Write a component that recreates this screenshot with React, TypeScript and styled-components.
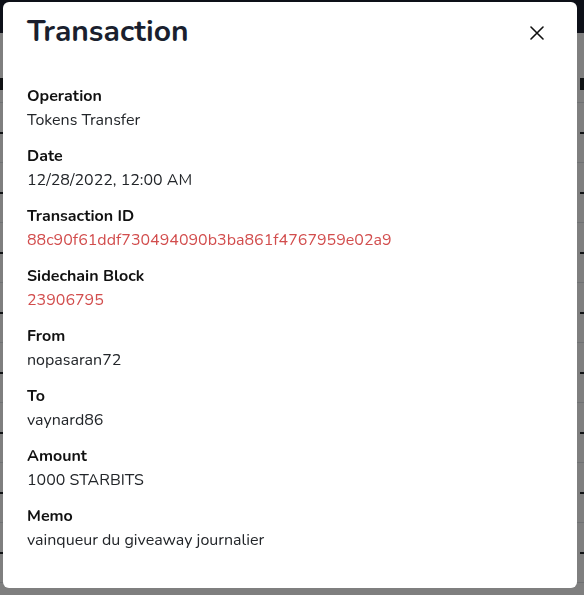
import * as React from "react";
import styled, { createGlobalStyle } from "styled-components";

const GlobalStyle = createGlobalStyle`
  html, body {
    margin: 0;
    padding: 0;
    height: 100%;
    overflow: hidden;
  }
  body {
    font-family: "Nunito", "Lato", "Noto Sans", sans-serif;
    background: #ffffff;
  }
`;

const Page = styled.div`
  height: 100vh;
  display: flex;
  flex-direction: column;
`;

const NavBar = styled.div`
  height: 33px;
  background: #1b2130;
  flex-shrink: 0;
`;

const Table = styled.div`
  display: flex;
  flex-direction: column;
`;

const TableRow = styled.div<{ $head?: boolean }>`
  display: flex;
  justify-content: space-between;
  align-items: ${(p) => (p.$head ? "flex-end" : "center")};
  height: ${(p) => (p.$head ? "70px" : "60px")};
  padding-bottom: ${(p) => (p.$head ? "12px" : "0")};
  border-bottom: 1px solid #dee2e6;
  box-sizing: border-box;
`;

// edge fragments of the table behind the overlay
const Mark = styled.div<{ $tall?: boolean }>`
  width: 8px;
  height: ${(p) => (p.$tall ? "12px" : "2px")};
  background: #212529;
  margin: 0 -4px;
`;

const Backdrop = styled.div`
  position: fixed;
  inset: 0;
  background: rgba(0, 0, 0, 0.5);
`;

const Modal = styled.div`
  position: fixed;
  top: 2px;
  left: 3px;
  right: 7px;
  bottom: 7px;
  background: #ffffff;
  border-radius: 6px;
  display: flex;
  flex-direction: column;
`;

const Header = styled.div`
  display: flex;
  align-items: center;
  justify-content: space-between;
  padding: 11px 28px 10px 24px;
`;

const Title = styled.h2`
  margin: 0;
  font-size: 30px;
  line-height: 38px;
  font-weight: 700;
  color: #1a1f2e;
`;

const CloseButton = styled.button`
  border: none;
  background: transparent;
  padding: 0;
  width: 24px;
  height: 24px;
  display: flex;
  align-items: center;
  justify-content: center;
  cursor: pointer;
  margin-top: 1px;
`;

const Body = styled.div`
  display: flex;
  flex-direction: column;
  gap: 12px;
  padding: 23px 24px;
`;

const Field = styled.div`
  display: flex;
  flex-direction: column;
`;

const Label = styled.div`
  font-size: 16px;
  line-height: 24px;
  font-weight: 700;
  color: #111111;
`;

const Value = styled.div<{ $link?: boolean }>`
  font-size: 16px;
  line-height: 24px;
  color: ${(p) => (p.$link ? "#d24d4d" : "#222529")};
`;

const fields: { label: string; value: string; link?: boolean }[] = [
  { label: "Operation", value: "Tokens Transfer" },
  { label: "Date", value: "12/28/2022, 12:00 AM" },
  { label: "Transaction ID", value: "88c90f61ddf730494090b3ba861f4767959e02a9", link: true },
  { label: "Sidechain Block", value: "23906795", link: true },
  { label: "From", value: "nopasaran72" },
  { label: "To", value: "vaynard86" },
  { label: "Amount", value: "1000 STARBITS" },
  { label: "Memo", value: "vainqueur du giveaway journalier" },
];

export default function App() {
  return (
    <>
      <GlobalStyle />
      <Page>
        <NavBar />
        <Table>
          <TableRow $head>
            <Mark $tall />
            <Mark $tall />
          </TableRow>
          {Array.from({ length: 8 }).map((_, i) => (
            <TableRow key={i}>
              <Mark />
              <Mark />
            </TableRow>
          ))}
        </Table>
      </Page>
      <Backdrop />
      <Modal role="dialog">
        <Header>
          <Title>Transaction</Title>
          <CloseButton aria-label="Close">
            <svg width="14" height="14" viewBox="0 0 14 14">
              <path d="M1 1 L13 13 M13 1 L1 13" stroke="#111" strokeWidth="1.6" strokeLinecap="round" />
            </svg>
          </CloseButton>
        </Header>
        <Body>
          {fields.map((f) => (
            <Field key={f.label}>
              <Label>{f.label}</Label>
              <Value $link={f.link}>{f.value}</Value>
            </Field>
          ))}
        </Body>
      </Modal>
    </>
  );
}
